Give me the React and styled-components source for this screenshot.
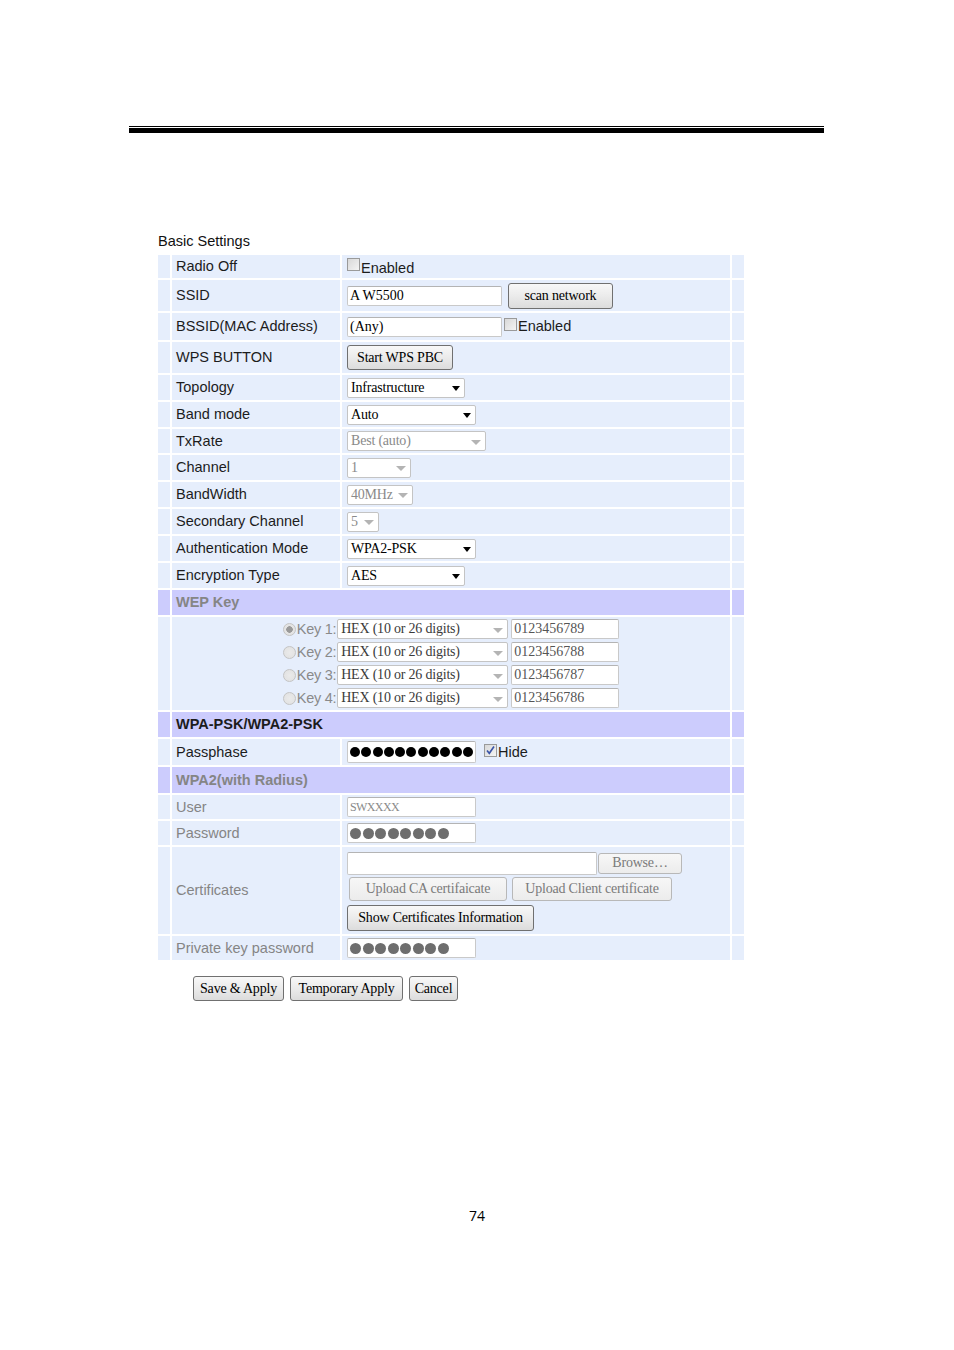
import React from "react";
import styled, { createGlobalStyle, css } from "styled-components";

const Global = createGlobalStyle`
  html, body { margin: 0; padding: 0; background: #fff; }
  body { font-family: "Liberation Sans", Arial, sans-serif; }
`;

const ROW_BG = "#e6eefc";
const HEAD_BG = "#ccccfd";
const SANS = `"Liberation Sans", Arial, sans-serif`;
const SERIF = `"Liberation Serif", "Times New Roman", serif`;

const Page = styled.div`
  width: 954px;
  min-height: 1350px;
  padding-top: 126px;
  box-sizing: border-box;
`;

const Rule = styled.div`
  margin-left: 129px;
  width: 695px;
  display: flex;
  flex-direction: column;
  gap: 1px;
`;

const RuleLine = styled.div`
  height: ${(p) => p.$h}px;
  background: #000;
`;

const Content = styled.div`
  margin-left: 158px;
  margin-top: 100px;
  width: 586px;
`;

const Title = styled.div`
  font: 14.5px/17px ${SANS};
  color: #111;
  margin-bottom: 5px;
`;

const Table = styled.div`
  display: flex;
  flex-direction: column;
  gap: 2px;
  background: #fff;
`;

const Row = styled.div`
  display: grid;
  grid-template-columns: 12px 168px 388px 12px;
  column-gap: 2px;
  height: ${(p) => p.$h}px;
`;

const Cell = styled.div`
  background: ${(p) => (p.$head ? HEAD_BG : ROW_BG)};
  display: flex;
  align-items: center;
  box-sizing: border-box;
  ${(p) => p.$span && css`grid-column: 2 / span 2;`}
`;

const Label = styled(Cell)`
  padding-left: 4px;
  font: 14.5px/17px ${SANS};
  color: ${(p) => (p.$dim ? "#858585" : "#1c1c1c")};
  ${(p) => p.$bold && css`font-weight: bold;`}
`;

const Value = styled(Cell)`
  padding-left: 5px;
  gap: ${(p) => p.$gap ?? 6}px;
`;

const Text = styled.span`
  font: 14.5px/17px ${SANS};
  color: ${(p) => (p.$dim ? "#8a8a8a" : "#1c1c1c")};
  ${(p) => p.$down && css`margin-top: 3px;`}
`;

const Input = styled.div`
  width: ${(p) => p.$w}px;
  height: ${(p) => p.$h ?? 20}px;
  box-sizing: border-box;
  background: #fff;
  border: 1px solid #c9c9c9;
  border-top-color: #b4b4b4;
  border-radius: 2px;
  display: flex;
  align-items: center;
  padding-left: 2px;
  font: 14px/16px ${SERIF};
  color: ${(p) => p.$color ?? "#000"};
  white-space: nowrap;
  overflow: hidden;
  ${(p) => p.$ml && css`margin-left: ${p.$ml}px;`}
`;

const SmallInput = styled(Input)`
  font-size: 12px;
  letter-spacing: -0.6px;
`;

const Btn = styled.div`
  width: ${(p) => p.$w}px;
  height: ${(p) => p.$h ?? 25}px;
  box-sizing: border-box;
  border: 1px solid ${(p) => (p.$off ? "#b8b8b8" : "#707070")};
  border-radius: 3px;
  background: ${(p) =>
    p.$off
      ? "linear-gradient(#f7f7f7, #ececec)"
      : "linear-gradient(#f8f8f8 0%, #ebebeb 50%, #dcdcdc 100%)"};
  display: flex;
  align-items: center;
  justify-content: center;
  font: 14px/16px ${SERIF};
  color: ${(p) => (p.$off ? "#7a7a7a" : "#000")};
  white-space: nowrap;
  letter-spacing: -0.2px;
  ${(p) => p.$ml && css`margin-left: ${p.$ml}px;`}
`;

const SelectBox = styled.div`
  width: ${(p) => p.$w}px;
  height: 20px;
  box-sizing: border-box;
  background: #fff;
  border: 1px solid #c4c4c4;
  border-radius: 2px;
  display: flex;
  align-items: center;
  padding: 0 4px 0 3px;
  font: 14px/16px ${SERIF};
  color: ${(p) => (p.$off ? "#8a8a8a" : p.$color ?? "#000")};
  white-space: nowrap;
  letter-spacing: -0.2px;
`;

const Arrow = styled.span`
  margin-left: auto;
  width: 0;
  height: 0;
  border-left: ${(p) => (p.$off ? 5 : 4)}px solid transparent;
  border-right: ${(p) => (p.$off ? 5 : 4)}px solid transparent;
  border-top: 5px solid ${(p) => (p.$off ? "#b4b4b4" : "#000")};
  margin-top: 2px;
  flex-shrink: 0;
`;

const Select = ({ w, off, dimArrow, color, children }) => (
  <SelectBox $w={w} $off={off} $color={color}>
    {children}
    <Arrow $off={off || dimArrow} />
  </SelectBox>
);

const Box = styled.span`
  width: 13px;
  height: 13px;
  box-sizing: border-box;
  border: 1px solid #9a9a9a;
  background: linear-gradient(135deg, #d8d8d8, #f4f4f4);
  display: inline-flex;
  align-items: center;
  justify-content: center;
  flex-shrink: 0;
  ${(p) => p.$up && css`margin-top: -4px;`}
`;

const Check = ({ checked, up }) => (
  <Box $up={up}>
    {checked && (
      <svg width="11" height="11" viewBox="0 0 11 11">
        <path d="M2 5.5 L4.3 8.3 L9 1.5" fill="none" stroke="#3a54a8" strokeWidth="1.6" />
      </svg>
    )}
  </Box>
);

const CheckLabel = styled.span`
  display: inline-flex;
  align-items: center;
  gap: 1px;
`;

const Radio = styled.span`
  width: 13px;
  height: 13px;
  box-sizing: border-box;
  border-radius: 50%;
  border: 1px solid #c4c4c4;
  background: radial-gradient(circle, ${(p) => (p.$on ? "#9a9a9a 0 3px, #e4e4e4 3.5px" : "#eaeaea 0, #e0e0e0 100%")});
  flex-shrink: 0;
`;

const DotsBox = styled(Input)`
  gap: ${(p) => p.$gap}px;
  padding-left: 2px;
`;

const Dot = styled.span`
  width: ${(p) => p.$s}px;
  height: ${(p) => p.$s}px;
  border-radius: 50%;
  background: ${(p) => p.$c};
  flex-shrink: 0;
`;

const Dots = ({ n, w, h, c, s, gap }) => (
  <DotsBox $w={w} $h={h} $gap={gap}>
    {Array.from({ length: n }).map((_, i) => (
      <Dot key={i} $s={s} $c={c} />
    ))}
  </DotsBox>
);

const WepList = styled(Cell)`
  flex-direction: column;
  justify-content: center;
  align-items: center;
  gap: 2px;
`;

const WepRow = styled.div`
  display: flex;
  align-items: center;
  height: 21px;
`;

const KeyText = styled.span`
  font: 14.5px/17px ${SANS};
  color: #8a8a8a;
  margin: 0 1px 0 1px;
  letter-spacing: -0.3px;
`;

const CertStack = styled(Value)`
  flex-direction: column;
  align-items: flex-start;
  justify-content: center;
  gap: 2px;
  padding-top: 1px;
`;

const Line = styled.div`
  display: flex;
  align-items: center;
  gap: ${(p) => p.$gap ?? 0}px;
  margin-left: ${(p) => p.$ml ?? 0}px;
  margin-top: ${(p) => p.$mt ?? 0}px;
`;

const Actions = styled.div`
  display: flex;
  gap: 6px;
  margin: 16px 0 0 35px;
`;

const PageNo = styled.div`
  margin-top: 206px;
  text-align: center;
  font: 14px/18px "Open Sans", "Liberation Sans", sans-serif;
  color: #000;
  width: 954px;
`;

const Side = ({ head }) => <Cell $head={head} />;

const FieldRow = ({ h, label, dim, children, gap }) => (
  <Row $h={h}>
    <Side />
    <Label $dim={dim}>{label}</Label>
    <Value $gap={gap}>{children}</Value>
    <Side />
  </Row>
);

const HeadRow = ({ h, children, dim }) => (
  <Row $h={h}>
    <Side head />
    <Label $head $span $bold $dim={dim}>
      {children}
    </Label>
    <Side head />
  </Row>
);

const keys = [
  ["Key 1:", "0123456789", true],
  ["Key 2:", "0123456788", false],
  ["Key 3:", "0123456787", false],
  ["Key 4:", "0123456786", false],
];

export default function App() {
  return (
    <Page>
      <Global />
      <Rule>
        <RuleLine $h={1} />
        <RuleLine $h={5} />
      </Rule>
      <Content>
        <Title>Basic Settings</Title>
        <Table>
          <FieldRow h={23} label="Radio Off">
            <CheckLabel>
              <Check up />
              <Text $down>Enabled</Text>
            </CheckLabel>
          </FieldRow>
          <FieldRow h={31} label="SSID">
            <Input $w={155}>A W5500</Input>
            <Btn $w={105} $h={26}>scan network</Btn>
          </FieldRow>
          <FieldRow h={27} label="BSSID(MAC Address)" gap={2}>
            <Input $w={155}>(Any)</Input>
            <CheckLabel>
              <Check up />
              <Text>Enabled</Text>
            </CheckLabel>
          </FieldRow>
          <FieldRow h={31} label="WPS BUTTON">
            <Btn $w={106}>Start WPS PBC</Btn>
          </FieldRow>
          <FieldRow h={25} label="Topology">
            <Select w={118}>Infrastructure</Select>
          </FieldRow>
          <FieldRow h={25} label="Band mode">
            <Select w={129}>Auto</Select>
          </FieldRow>
          <FieldRow h={24} label="TxRate">
            <Select w={139} off>Best (auto)</Select>
          </FieldRow>
          <FieldRow h={25} label="Channel">
            <Select w={64} off>1</Select>
          </FieldRow>
          <FieldRow h={25} label="BandWidth">
            <Select w={66} off>40MHz</Select>
          </FieldRow>
          <FieldRow h={25} label="Secondary Channel">
            <Select w={32} off>5</Select>
          </FieldRow>
          <FieldRow h={25} label="Authentication Mode">
            <Select w={129}>WPA2-PSK</Select>
          </FieldRow>
          <FieldRow h={25} label="Encryption Type">
            <Select w={118}>AES</Select>
          </FieldRow>
          <HeadRow h={25} dim>WEP Key</HeadRow>
          <Row $h={93}>
            <Side />
            <WepList $span>
              {keys.map(([k, v, on]) => (
                <WepRow key={k}>
                  <Radio $on={on} />
                  <KeyText>{k}</KeyText>
                  <Select w={171} color="#3a3a3a" dimArrow>
                    HEX (10 or 26 digits)
                  </Select>
                  <Input $w={108} $color="#555" $ml={3}>
                    {v}
                  </Input>
                </WepRow>
              ))}
            </WepList>
            <Side />
          </Row>
          <HeadRow h={25}>WPA-PSK/WPA2-PSK</HeadRow>
          <FieldRow h={26} label="Passphase" gap={8}>
            <Dots n={11} w={129} h={22} c="#000" s={10} gap={1.3} />
            <CheckLabel>
              <Check checked up />
              <Text>Hide</Text>
            </CheckLabel>
          </FieldRow>
          <HeadRow h={26} dim>WPA2(with Radius)</HeadRow>
          <FieldRow h={24} label="User" dim>
            <SmallInput $w={129} $color="#8a8a8a">SWXXXX</SmallInput>
          </FieldRow>
          <FieldRow h={24} label="Password" dim>
            <Dots n={8} w={129} c="#6e6e6e" s={11} gap={1.5} />
          </FieldRow>
          <Row $h={87}>
            <Side />
            <Label $dim>Certificates</Label>
            <CertStack>
              <Line>
                <Input $w={250} $h={23} />
                <Btn $w={84} $h={21} $off $ml={1}>
                  Browse…
                </Btn>
              </Line>
              <Line $gap={5} $ml={2}>
                <Btn $w={158} $h={24} $off>Upload CA certifaicate</Btn>
                <Btn $w={160} $h={24} $off>Upload Client certificate</Btn>
              </Line>
              <Line $mt={2}>
                <Btn $w={187} $h={26}>Show Certificates Information</Btn>
              </Line>
            </CertStack>
            <Side />
          </Row>
          <FieldRow h={24} label="Private key password" dim>
            <Dots n={8} w={129} c="#6e6e6e" s={11} gap={1.5} />
          </FieldRow>
        </Table>
        <Actions>
          <Btn $w={91}>Save &amp; Apply</Btn>
          <Btn $w={113}>Temporary Apply</Btn>
          <Btn $w={49}>Cancel</Btn>
        </Actions>
      </Content>
      <PageNo>74</PageNo>
    </Page>
  );
}
